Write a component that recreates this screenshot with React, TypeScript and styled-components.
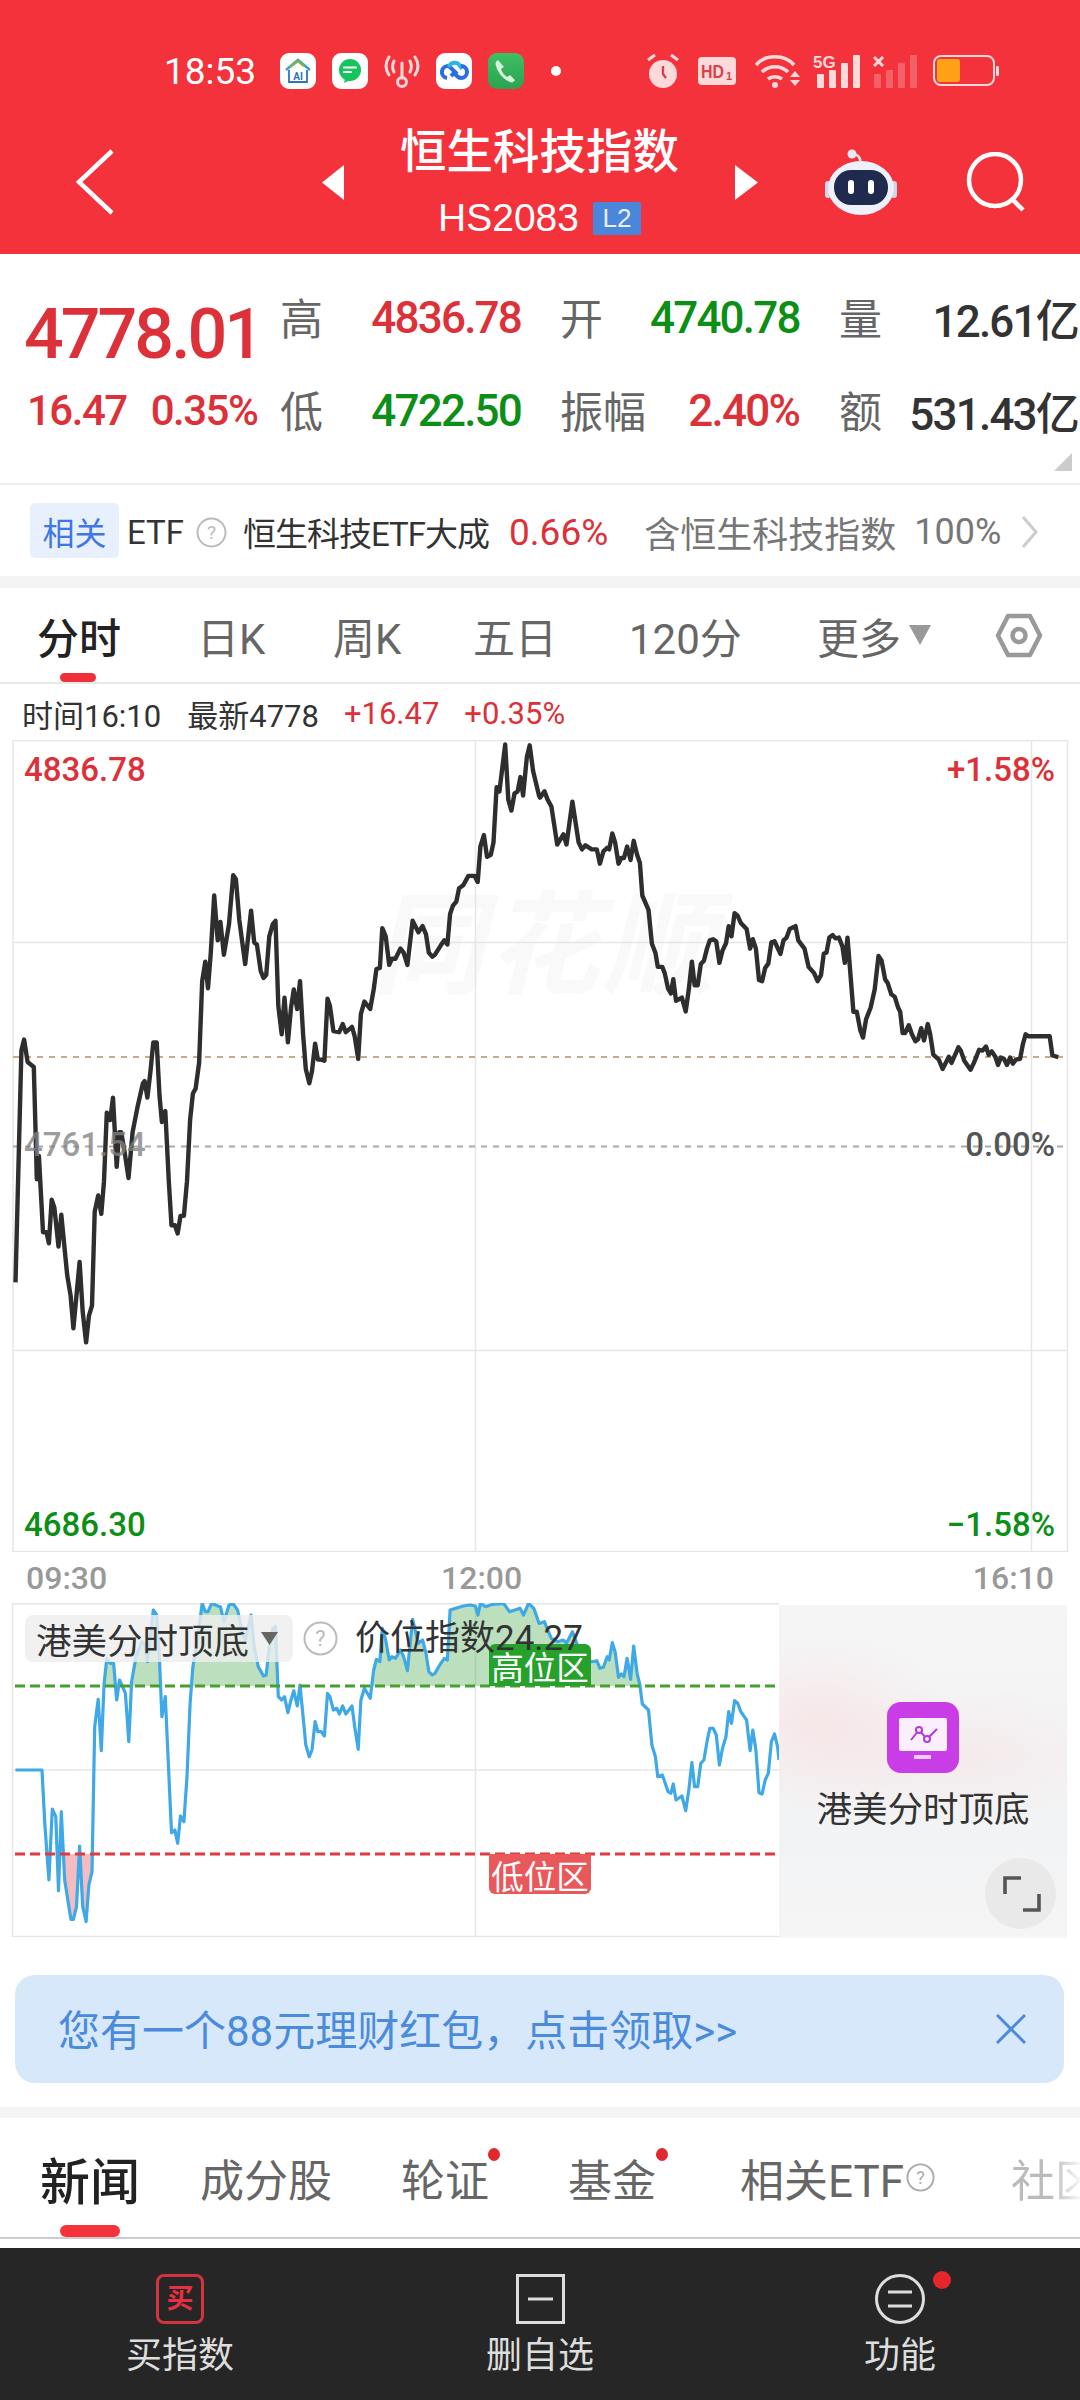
import React from "react";
import styled, { createGlobalStyle } from "styled-components";

const RED = "#dc3138";
const GREEN = "#0c8f17";
const FONT = `Roboto, "Noto Sans CJK SC", sans-serif`;

const Global = createGlobalStyle`
  html, body { margin: 0; padding: 0; background: #fff; }
  * { box-sizing: border-box; }
`;

const Page = styled.div`
  width: 1080px; height: 2400px; display: flex; flex-direction: column; overflow: hidden;
  background: #fff; font-family: ${FONT}; color: #333;
`;

/* header */
const Header = styled.header`
  height: 254px; flex: none; background: #f4323c; color: #fff; display: flex; flex-direction: column;
`;
const StatusBar = styled.div`
  display: flex; align-items: center; height: 36px; margin-top: 53px; padding: 0 81px 0 164px;
`;
const Clock = styled.span`
  font-size: 37px; width: 116px; color: #fff;
`;
const AppIcons = styled.div`
  display: flex; gap: 16px; align-items: center;
`;
const AppTile = styled.span<{ $bg?: string }>`
  width: 36px; height: 36px; border-radius: 9px; background: ${(p) => p.$bg || "#fff"}; display: block; overflow: hidden;
  svg { display: block; }
`;
const Dot = styled.span`
  width: 10px; height: 10px; border-radius: 50%; background: #fff; margin-left: 27px;
`;
const Indicators = styled.div`
  display: flex; gap: 13px; align-items: center; margin-left: auto;
  svg { display: block; }
`;
const NavBar = styled.div`
  display: grid; grid-template-columns: 246px 22px 391px 90px 141px 1fr; align-items: center;
  height: 116px; margin-top: 35px; padding-left: 76px;
  svg { display: block; }
`;
const TitleBlock = styled.div`
  display: flex; flex-direction: column; align-items: center; gap: 16px;
`;
const Title = styled.div`
  font-size: 46.5px; line-height: 56px; font-weight: 500; white-space: nowrap;
`;
const SubTitle = styled.div`
  display: flex; align-items: center; gap: 14px; height: 44px; font-size: 39px; font-family: "Liberation Sans", sans-serif;
`;
const Level = styled.span`
  width: 48px; height: 33px; background: #4a86da; color: #e8f0ff; border-radius: 2px; font-size: 26px;
  display: flex; align-items: center; justify-content: center;
`;

/* quote */
const Quote = styled.section`
  position: relative; height: 231px; flex: none; padding: 17px 0 0 24px; border-bottom: 2px solid #eee;
  display: grid; grid-template-columns: 256px 90px 151px 129px 149px 106px 173px; grid-auto-rows: 93px; align-items: center;
`;
const BigPrice = styled.div`
  font-size: 70px; font-weight: 500; letter-spacing: -3px; color: ${RED}; margin-top: 32px; line-height: 1;
`;
const ChangeGroup = styled.div`
  display: flex; gap: 24px; padding-left: 3px; white-space: nowrap;
`;
const Change = styled.span`
  font-size: 42px; letter-spacing: -1.5px; color: ${RED}; font-weight: 500;
`;
const QLabel = styled.span<{ $inset?: number }>`
  font-size: 43px; color: #666; padding-left: ${(p) => p.$inset || 0}px; margin-bottom: 3px; white-space: nowrap;
`;
const QValue = styled.span<{ $c?: string }>`
  font-size: 44px; letter-spacing: -1.8px; font-weight: 500; text-align: right; white-space: nowrap; color: ${(p) => p.$c || "#333"};
`;
const Corner = styled.span`
  position: absolute; right: 8px; top: 199px; width: 18px; height: 18px; background: #ccc;
  clip-path: polygon(100% 0, 100% 100%, 0 100%);
`;

/* ETF row */
const EtfRow = styled.div`
  height: 91px; flex: none; display: flex; align-items: center; padding: 3px 0 0 30px; white-space: nowrap; font-size: 33px;
  svg { display: block; }
`;
const EtfTag = styled.span`
  width: 89px; height: 55px; margin-top: -3px; background: #e8f0fd; color: #3f77e4; border-radius: 5px; font-size: 32px;
  display: flex; align-items: center; justify-content: center; flex: none;
`;
const EtfText = styled.span<{ $ml: number; $c?: string; $size?: number; $ls?: number }>`
  margin-left: ${(p) => p.$ml}px; color: ${(p) => p.$c || "#333"}; letter-spacing: ${(p) => p.$ls || 0}px; flex: none;
  font-size: ${(p) => p.$size || 33}px;
`;
const HelpIcon = styled.svg<{ $ml: number }>`
  margin-left: ${(p) => p.$ml}px; flex: none;
`;
const Band = styled.div<{ $h: number }>`
  height: ${(p) => p.$h}px; flex: none; background: #f4f4f4;
`;

/* period tabs */
const PeriodTabs = styled.nav`
  height: 96px; flex: none; padding-left: 37px; border-bottom: 2px solid #e8e8e8;
  display: grid; grid-template-columns: 160px 136px 140px 156px 188px 178px 1fr; align-items: center;
  svg { display: block; }
`;
const PeriodTab = styled.div<{ $active?: boolean }>`
  position: relative; height: 94px; display: flex; align-items: center; font-size: 42px; white-space: nowrap;
  color: ${(p) => (p.$active ? "#222" : "#666")}; font-weight: ${(p) => (p.$active ? 500 : 400)};
  ${(p) =>
    p.$active &&
    `&::after { content: ""; position: absolute; left: 23px; bottom: 0; width: 36px; height: 9px; border-radius: 5px; background: #ef3039; }`}
`;
const Caret = styled.span`
  width: 22px; height: 20px; margin: 0 0 0 8px; background: #999; clip-path: polygon(0 0, 100% 0, 50% 100%);
`;

/* info line */
const InfoRow = styled.div`
  height: 56px; flex: none; padding: 2px 0 0 22px; display: flex; align-items: center; font-size: 31px; white-space: nowrap;
`;
const InfoText = styled.span<{ $ml?: number; $c?: string }>`
  margin-left: ${(p) => p.$ml || 0}px; color: ${(p) => p.$c || "#333"};
`;

/* main chart */
const ChartBox = styled.div`
  position: relative; height: 812px; flex: none;
  svg { display: block; }
`;
const AxisLabel = styled.span<{ $top: number; $left?: number; $right?: number; $c: string }>`
  position: absolute; top: ${(p) => p.$top}px; line-height: 40px; font-size: 33px; font-weight: 500; white-space: nowrap;
  color: ${(p) => p.$c};
  ${(p) => (p.$left !== undefined ? `left:${p.$left}px;` : `right:${p.$right}px;`)}
`;
const TimeAxis = styled.div`
  height: 51px; flex: none; padding: 0 26px; display: grid; grid-template-columns: 415px 1fr auto; align-items: center;
  font-size: 32px; font-weight: 500; color: #999;
`;

/* sub chart */
const SubChart = styled.div`
  position: relative; height: 335px; flex: none; display: grid; grid-template-columns: 779px 288px;
  svg { display: block; }
`;
const IndicatorPick = styled.div`
  position: absolute; left: 25px; top: 12px; width: 268px; height: 47px; border-radius: 8px; background: rgba(238, 238, 238, 0.82);
  display: flex; align-items: center; padding-left: 11px; font-size: 35.5px; color: #333; white-space: nowrap;
`;
const PickCaret = styled.span`
  width: 17px; height: 13px; margin-left: 12px; background: #666; clip-path: polygon(0 0, 100% 0, 50% 100%);
`;
const SubHelp = styled.svg`
  position: absolute; left: 303px; top: 18px;
`;
const PosValue = styled.span`
  position: absolute; left: 355px; top: 12px; line-height: 47px; font-size: 35px; color: #333; white-space: nowrap; z-index: 2;
`;
const ZoneTag = styled.span<{ $top: number; $h: number; $bg: string; $r: string }>`
  position: absolute; left: 489px; top: ${(p) => p.$top}px; width: 102px; height: ${(p) => p.$h}px; background: ${(p) => p.$bg};
  border-radius: ${(p) => p.$r}; color: #fff; font-size: 32.5px; display: flex; align-items: center; justify-content: center;
  white-space: nowrap;
`;
const PromoPanel = styled.div`
  position: relative; margin-top: 2px; display: flex; flex-direction: column; align-items: center; padding-top: 97px;
  background:
    radial-gradient(ellipse 130px 90px at 40px 120px, rgba(248, 226, 228, 0.75), transparent),
    radial-gradient(ellipse 170px 70px at 180px 150px, rgba(246, 230, 232, 0.7), transparent),
    linear-gradient(#f5f5f6, #f2f3f4 70%, #f5f5f6);
`;
const PromoIcon = styled.svg`
  flex: none;
`;
const PromoText = styled.div`
  margin-top: 15px; font-size: 35.5px; line-height: 44px; color: #333; white-space: nowrap;
`;
const ExpandButton = styled.span`
  position: absolute; right: 11px; bottom: 9px; width: 71px; height: 71px; border-radius: 50%; background: #e9e9e9;
`;

/* banner */
const Banner = styled.div`
  height: 108px; flex: none; margin: 37px 16px 24px 15px; padding: 0 38px 0 43px; border-radius: 20px; background: #d8e8fb;
  display: flex; align-items: center; justify-content: space-between; color: #4a8bdc; font-size: 42px; white-space: nowrap;
  svg { display: block; }
`;
const BannerText = styled.span`
  margin-top: -3px;
`;

/* news tabs */
const NewsTabs = styled.nav`
  height: 121px; flex: none; padding-left: 40px; border-bottom: 2px solid #ccc; overflow: hidden;
  display: grid; grid-template-columns: 160px 201px 167px 172px 271px 69px; align-items: center;
  svg { display: block; }
`;
const NewsTab = styled.div<{ $active?: boolean; $dot?: number; $fade?: boolean }>`
  position: relative; height: 119px; display: flex; align-items: center; white-space: nowrap; overflow: visible;
  font-size: ${(p) => (p.$active ? 50 : 44)}px; font-weight: ${(p) => (p.$active ? 500 : 400)};
  color: ${(p) => (p.$active ? "#222" : p.$fade ? "#bbb" : "#666")};
  ${(p) => p.$fade && `-webkit-mask-image: linear-gradient(to right, #000 60%, rgba(0,0,0,.1) 100%); mask-image: linear-gradient(to right, #000 60%, rgba(0,0,0,.1) 100%);`}
  ${(p) =>
    p.$dot !== undefined &&
    `&::after { content: ""; position: absolute; left: ${p.$dot}px; top: 30px; width: 12px; height: 13px; border-radius: 50%; background: #e0282f; }`}
  ${(p) =>
    p.$active &&
    `&::before { content: ""; position: absolute; left: 20px; bottom: 0; width: 60px; height: 12px; border-radius: 6px; background: #f5333d; }`}
`;
const Spacer = styled.div`
  height: 9px; flex: none;
`;

/* footer */
const Footer = styled.footer`
  flex: 1; background: #262626; display: grid; grid-template-columns: repeat(3, 1fr); padding-top: 26px;
`;
const FootItem = styled.div`
  display: flex; flex-direction: column; align-items: center; color: #ddd; font-size: 36px; line-height: 44px; white-space: nowrap;
  svg { display: block; }
`;
const FootIcon = styled.div`
  position: relative; height: 50px; margin-bottom: 10px; display: flex; align-items: center;
`;
const BuyMark = styled.span`
  width: 48px; height: 50px; border: 3px solid #d2333f; border-radius: 8px; color: #ea2f45; font-size: 27px; font-weight: 700;
  display: flex; align-items: center; justify-content: center;
`;
const FootDot = styled.span`
  position: absolute; left: 58px; top: -3px; width: 18px; height: 18px; border-radius: 50%; background: #e5262c;
`;

/* data traced from the picture */
type P = [number, number];
const A: P[] = [[45,1378],[62,810],[70,783],[80,838],[98,850],[105,1065],[107,1125],[113,1068],[125,1255],[135,1255],[142,1282],[150,1175],[158,1195],[170,1290],[178,1212],[195,1360],[205,1410],[213,1490],[231,1328],[240,1450],[250,1525],[258,1460],[267,1435],[275,1205],[285,1165],[294,1210],[302,1130],[310,962],[320,980],[328,925],[339,1095],[346,1010],[352,1010],[362,1060],[373,1122],[385,1010],[400,945],[415,890],[420,885],[428,925],[437,860],[445,790],[455,790],[463,920],[470,985],[480,958],[490,1130],[498,1238],[508,1238],[516,1258],[524,1215],[534,1215],[543,1130],[552,980],[560,915],[568,903],[578,840],[587,640],[596,592],[604,657],[612,570],[622,430],[632,540],[640,495],[650,575],[665,500],[677,380],[685,390],[695,490],[712,598],[729,467],[738,545],[746,550],[757,615],[765,632],[773,625],[782,530],[792,500],[800,492],[808,700],[818,770],[826,680],[836,790],[845,705],[853,660],[863,708],[871,640],[880,770],[888,855],[898,890],[906,860],[915,793],[923,832],[933,832],[942,835],[951,683],[958,700],[968,762],[985,765],[995,745],[1004,765],[1022,752],[1030,775],[1040,830],[1048,720],[1058,690],[1075,708],[1085,660],[1093,610],[1103,607],[1110,510],[1120,530],[1130,600],[1138,585],[1148,585],[1163,560],[1172,570],[1183,600],[1198,492],[1215,520],[1227,505],[1237,525],[1245,570],[1255,580],[1263,575],[1280,552],[1290,540],[1299,550],[1307,475],[1315,455],[1325,445],[1333,412],[1345,405],[1360,382],[1378,382],[1387,397],[1395,310],[1405,282],[1414,335],[1425,330],[1433,300],[1442,165],[1450,175],[1467,60],[1476,195],[1485,222],[1494,180],[1503,175],[1511,140],[1519,185],[1530,90],[1538,62],[1548,125],[1565,185]];
const B: P[] = [[0,190],[13,175],[22,195],[33,212],[50,305],[68,280],[77,305],[94,200],[112,300],[122,317],[132,307],[150,317],[165,317],[174,352],[184,322],[195,313],[201,317],[210,278],[218,300],[228,352],[236,338],[244,338],[253,310],[263,343],[272,296],[282,330],[290,350],[297,430],[315,465],[325,548],[335,570],[342,605],[355,605],[362,620],[372,658],[380,670],[387,635],[395,688],[412,680],[423,714],[432,660],[441,592],[449,650],[458,650],[467,598],[476,590],[485,560],[493,540],[503,537],[512,543],[521,595],[530,565],[540,547],[548,505],[556,530],[565,473],[574,480],[583,497],[600,512],[610,560],[618,537],[627,560],[636,637],[645,640],[654,607],[663,597],[672,545],[681,542],[698,573],[707,540],[716,533],[725,512],[742,505],[750,540],[768,560],[780,605],[796,620],[806,640],[816,625],[824,572],[832,570],[840,533],[850,527],[858,535],[868,533],[878,555],[885,595],[893,533],[903,640],[910,715],[920,715],[930,760],[938,778],[947,733],[960,705],[972,660],[983,578],[992,590],[1002,635],[1010,645],[1020,672],[1030,678],[1040,705],[1046,715],[1053,767],[1060,767],[1071,748],[1080,770],[1090,787],[1098,782],[1107,755],[1115,785],[1126,745],[1133,770],[1142,820],[1158,832],[1169,855],[1178,840],[1187,825],[1195,840],[1215,802],[1222,810],[1232,835],[1250,857],[1260,840],[1275,808],[1285,810],[1295,800],[1303,820],[1312,812],[1322,825],[1330,845],[1338,827],[1347,830],[1356,845],[1365,827],[1373,842],[1382,832],[1394,830],[1402,795],[1410,770],[1418,775],[1480,775],[1488,822],[1505,826]];
const C: P[] = [[45,630],[122,630],[130,790],[142,960],[152,747],[162,770],[170,992],[178,755],[188,960],[200,1040],[206,1078],[213,1078],[222,1040],[231,858],[240,1040],[250,1085],[258,975],[267,935],[275,500],[285,418],[294,572],[302,375],[310,295],[320,310],[330,310],[339,420],[347,360],[358,385],[364,400],[374,545],[382,365],[395,290],[412,245],[420,250],[428,305],[437,230],[445,150],[455,165],[463,300],[470,470],[480,410],[490,640],[498,818],[508,810],[516,850],[524,768],[534,785],[543,650],[552,430],[560,320],[568,270],[578,200],[587,130],[596,155],[604,155],[615,130],[632,138],[640,140],[650,185],[665,135],[677,132],[690,150],[700,200],[712,240],[729,165],[738,260],[750,320],[765,348],[773,345],[782,260],[792,205],[800,200],[808,410],[818,420],[826,410],[836,458],[845,420],[853,392],[863,438],[871,375],[880,470],[888,555],[898,590],[906,570],[915,485],[923,515],[933,515],[942,528],[951,400],[958,410],[968,450],[978,445],[985,462],[995,438],[1004,462],[1022,438],[1030,500],[1040,568],[1048,420],[1058,385],[1075,415],[1085,330],[1093,298],[1103,305],[1110,205],[1120,240],[1130,300],[1138,290],[1148,295],[1163,270],[1172,290],[1183,332],[1198,178],[1215,250],[1227,240],[1237,280],[1245,335],[1255,345],[1263,340],[1280,310],[1290,295],[1299,300],[1307,150],[1345,138],[1365,135],[1380,138],[1388,165],[1395,130],[1410,140],[1430,133],[1462,130],[1480,155],[1510,145],[1520,165],[1535,130],[1550,145],[1565,190]];
const D: P[] = [[0,190],[13,185],[22,210],[33,235],[50,245],[68,240],[77,250],[94,215],[112,265],[122,300],[150,305],[165,302],[174,325],[184,322],[195,290],[201,300],[210,248],[218,275],[228,352],[236,342],[244,350],[253,295],[263,358],[272,258],[282,340],[290,375],[297,432],[315,450],[325,555],[335,590],[342,650],[355,645],[362,665],[372,695],[380,700],[387,672],[395,720],[412,708],[423,752],[432,690],[441,608],[449,680],[458,680],[467,610],[476,600],[485,545],[493,505],[503,505],[512,525],[521,615],[530,565],[540,530],[548,455],[556,490],[565,422],[574,430],[583,455],[600,480],[610,572],[618,510],[627,570],[636,698],[645,702],[654,660],[663,640],[672,545],[681,522],[690,560],[694,600]];

const SX = 1568 / 540;
const toPath = (pts: P[]) => pts.map(([x, y], i) => `${i ? "L" : "M"}${x.toFixed(1)} ${y.toFixed(1)}`).join("");
const pricePts: P[] = [
  ...A.map(([x, y]): P => [x / SX, 720 + y / 2.45]),
  ...B.map(([x, y]): P => [540 + x / SX, 720 + y / 2.45]),
];
const subPts: P[] = [
  ...C.map(([x, y]): P => [x / SX, 1560 + y / 3]),
  ...D.map(([x, y]): P => [540 + x / SX, 1560 + y / 3]),
];
const pricePath = toPath(pricePts);
const subPath = toPath(subPts);
const subFirst = subPts[0][0];
const subLast = subPts[subPts.length - 1][0];
const greenFill = `${subPath}L${subLast} 1937L${subFirst} 1937Z`;
const redFill = `${subPath}L${subLast} 1603L${subFirst} 1603Z`;

const GRID = "#e6e6e6";

function MainChart() {
  return (
    <svg width={1080} height={812} viewBox="0 740 1080 812">
      <text x={372} y={985} fontFamily={`"Noto Sans CJK SC", sans-serif`} fontWeight={700} fontStyle="italic" fontSize={112} fill="#f9f9f9" textLength={343}>同花顺</text>
      <g stroke={GRID} strokeWidth={1.5} fill="none">
        <path d="M13 740.5H1067.5V1551.5H13Z" />
        <path d="M13 942.5H1067.5M13 1350.5H1067.5M475.5 740V1552M1031.5 740V1552" />
      </g>
      <path d="M13 1057H1064" stroke="#c9aa86" strokeWidth={2} strokeDasharray="6 6" fill="none" />
      <path d="M13 1146.500H1064" stroke="#aaa" strokeWidth={2} strokeDasharray="6 6" fill="none" />
      <path d={pricePath} stroke="#2e2e2e" strokeWidth={4.4} strokeLinejoin="round" fill="none" />
    </svg>
  );
}

function SubChartPlot() {
  return (
    <svg width={779} height={335} viewBox="0 1603 779 335">
      <defs>
        <clipPath id="hi"><rect x={0} y={1603} width={779} height={83} /></clipPath>
        <clipPath id="lo"><rect x={0} y={1854} width={779} height={83} /></clipPath>
      </defs>
      <g stroke={GRID} strokeWidth={1.5} fill="none">
        <path d="M12.500 1937V1603.700H779M12.500 1936.500H779M12.500 1770H779M475.500 1603V1937" />
      </g>
      <path d={greenFill} fill="rgba(70,170,75,.36)" clipPath="url(#hi)" />
      <path d={redFill} fill="rgba(228,95,105,.42)" clipPath="url(#lo)" />
      <path d={subPath} stroke="#3fa8e6" strokeWidth={3.2} strokeLinejoin="round" fill="none" />
      <path d="M15 1686H775" stroke="#46a02f" strokeWidth={3} strokeDasharray="10 5" fill="none" />
      <path d="M15 1854H775" stroke="#e0393f" strokeWidth={3} strokeDasharray="10 5" fill="none" />
    </svg>
  );
}

const Help = ({ size = 31, c = "#bbb", t = "#bbb" }: { size?: number; c?: string; t?: string }) => (
  <>
    <circle cx={size / 2} cy={size / 2} r={size / 2 - 1.5} stroke={c} strokeWidth={2} fill="none" />
    <text x={size / 2} y={size * 0.72} textAnchor="middle" fontSize={size * 0.62} fontFamily="Roboto, sans-serif" fill={t}>?</text>
  </>
);

const PINK = "#fdd9da";

export default function App() {
  return (
    <Page>
      <Global />
      <Header>
        <StatusBar>
          <Clock>18:53</Clock>
          <AppIcons>
            <AppTile>
              <svg width={36} height={36} viewBox="0 0 36 36">
                <path d="M6 17 18 7l12 10" stroke="#3d9be0" strokeWidth={2.5} fill="none" />
                <path d="M10 14 18 8l6 5" stroke="#7ab648" strokeWidth={2.5} fill="none" />
                <path d="M9 17v12h18V17" stroke="#2b77b8" strokeWidth={1.8} fill="none" />
                <text x={18} y={27} textAnchor="middle" fontSize={10} fontWeight={700} fontFamily="Roboto, sans-serif" fill="#2b77b8">AI</text>
              </svg>
            </AppTile>
            <AppTile>
              <svg width={36} height={36} viewBox="0 0 36 36">
                <circle cx={18} cy={17} r={11} fill="#16c45e" />
                <path d="M13 26l-1 4 6-3z" fill="#16c45e" />
                <path d="M12 14.500h12M12 19h7" stroke="#fff" strokeWidth={2.2} strokeLinecap="round" />
              </svg>
            </AppTile>
            <svg width={36} height={36} viewBox="0 0 36 36" fill="none" stroke={PINK} strokeWidth={3} strokeLinecap="round" style={{ display: "block" }}>
              <path d="M5 4C1 10 1 16 5 22M31 4c4 6 4 12 0 18M10 8c-2 4-2 7 0 11M26 8c2 4 2 7 0 11" />
              <path d="M18 10v15" />
              <circle cx={18} cy={29} r={4.5} />
            </svg>
            <AppTile>
              <svg width={36} height={36} viewBox="0 0 36 36" fill="none" strokeWidth={4}>
                <path d="M11 25a6 6 0 1 1 2-12l8 8" stroke="#2a6fe0" />
                <path d="M13 14a6 6 0 0 1 11-1l2 3" stroke="#2db5e8" />
                <path d="M25 13a6 6 0 1 1 0 12c-2 0-3-1-4-2l-3-3-3 3" stroke="#2a6fe0" />
              </svg>
            </AppTile>
            <AppTile $bg="linear-gradient(#3fbf63,#2ba350)">
              <svg width={36} height={36} viewBox="0 0 36 36">
                <path d="M10 7c-2 1-3 3-2 6 2 7 7 13 14 16 2 1 4 0 5-2l-5-5-3 2c-3-2-5-5-6-8l3-2z" fill="#d6f3dd" />
              </svg>
            </AppTile>
          </AppIcons>
          <Dot />
          <Indicators>
            <svg width={38} height={36} viewBox="0 0 38 36">
              <circle cx={16} cy={21} r={14} fill={PINK} />
              <path d="M16 13v8l3 4" stroke="#d8404a" strokeWidth={2.4} fill="none" />
              <path d="M1 7l7-5M31 7l-7-5" stroke={PINK} strokeWidth={3} />
            </svg>
            <svg width={44} height={36} viewBox="0 0 44 36">
              <rect x={0} y={4} width={38} height={28} rx={4} fill={PINK} />
              <text x={3} y={25} fontSize={19} fontWeight={700} textLength={23} lengthAdjust="spacingAndGlyphs" fontFamily={`"Liberation Sans", sans-serif`} fill="#d8404a">HD</text>
              <text x={28} y={27} fontSize={11} fontWeight={700} fontFamily={`"Liberation Sans", sans-serif`} fill="#d8404a">1</text>
            </svg>
            <svg width={45} height={36} viewBox="0 0 45 36" fill="none" stroke={PINK} strokeWidth={3.6}>
              <path d="M1 12C10 1 30 1 39 12M7 19c7-7 19-7 26 0M13 26c4-3 10-3 14 0" />
              <circle cx={20} cy={32} r={3} fill={PINK} stroke="none" />
              <path d="M35 24l5-6 5 6zM35 27l5 6 5-6z" fill={PINK} stroke="none" />
            </svg>
            <svg width={47} height={36} viewBox="0 0 47 36" fill={PINK}>
              <text x={0} y={15} fontSize={17} fontWeight={700} fontFamily={`"Liberation Sans", sans-serif`}>5G</text>
              <rect x={4} y={21} width={7} height={14} rx={1} />
              <rect x={16} y={17} width={7} height={18} rx={1} />
              <rect x={28} y={10} width={7} height={25} rx={1} />
              <rect x={40} y={2} width={7} height={33} rx={1} />
            </svg>
            <svg width={47} height={36} viewBox="0 0 47 36" fill={PINK}>
              <path d="M1 4l9 9M10 4l-9 9" stroke={PINK} strokeWidth={3} />
              <g opacity={0.28}>
                <rect x={1} y={21} width={7} height={14} rx={1} />
                <rect x={13} y={17} width={7} height={18} rx={1} />
                <rect x={25} y={10} width={7} height={25} rx={1} />
                <rect x={37} y={2} width={7} height={33} rx={1} />
              </g>
            </svg>
            <svg width={66} height={36} viewBox="0 0 66 36">
              <rect x={1} y={3} width={60} height={29} rx={7} stroke={PINK} strokeWidth={2} fill="none" />
              <rect x={4} y={6} width={23} height={23} rx={3} fill="#ffa216" />
              <rect x={63} y={13} width={3} height={10} rx={1} fill={PINK} />
            </svg>
          </Indicators>
        </StatusBar>
        <NavBar>
          <svg width={38} height={66} viewBox="0 0 38 66" fill="none" stroke="#fff" strokeWidth={4.5}>
            <path d="M36 2 3 33l33 31" />
          </svg>
          <svg width={22} height={35} viewBox="0 0 22 35"><path d="M22 0v35L0 17.500z" fill="#fff" /></svg>
          <TitleBlock>
            <Title>恒生科技指数</Title>
            <SubTitle>
              HS2083
              <Level>L2</Level>
            </SubTitle>
          </TitleBlock>
          <svg width={23} height={35} viewBox="0 0 23 35"><path d="M0 0v35l23-17.500z" fill="#fff" /></svg>
          <svg width={72} height={66} viewBox="0 0 72 66">
            <path d="M35 14c1-5-2-9-7-8" stroke="#e6e6f5" strokeWidth={2.5} fill="none" />
            <circle cx={27} cy={5} r={4.5} fill="#ece9f5" />
            <rect x={0} y={32} width={6} height={17} rx={3} fill="#d5d5ea" />
            <rect x={66} y={32} width={6} height={17} rx={3} fill="#d5d5ea" />
            <ellipse cx={36} cy={39} rx={33} ry={27} fill="#eef0fb" />
            <rect x={9} y={21} width={54} height={35} rx={17} fill="#1f2a4e" />
            <rect x={23} y={31} width={6} height={14} rx={3} fill="#fff" />
            <rect x={43} y={31} width={6} height={14} rx={3} fill="#fff" />
          </svg>
          <svg width={60} height={60} viewBox="0 0 60 60" fill="none" stroke="#fff" strokeWidth={4.5}>
            <circle cx={29} cy={28} r={26} />
            <path d="M46 47l11 11" />
          </svg>
        </NavBar>
      </Header>

      <Quote>
        <BigPrice>4778.01</BigPrice>
        <QLabel>高</QLabel>
        <QValue $c={RED}>4836.78</QValue>
        <QLabel $inset={39}>开</QLabel>
        <QValue $c={GREEN}>4740.78</QValue>
        <QLabel $inset={40}>量</QLabel>
        <QValue>12.61亿</QValue>
        <ChangeGroup>
          <Change>16.47</Change>
          <Change>0.35%</Change>
        </ChangeGroup>
        <QLabel>低</QLabel>
        <QValue $c={GREEN}>4722.50</QValue>
        <QLabel $inset={39}>振幅</QLabel>
        <QValue $c={RED}>2.40%</QValue>
        <QLabel $inset={40}>额</QLabel>
        <QValue>531.43亿</QValue>
        <Corner />
      </Quote>

      <EtfRow>
        <EtfTag>相关</EtfTag>
        <EtfText $ml={8}>ETF</EtfText>
        <HelpIcon $ml={12} width={31} height={35} viewBox="0 0 31 31"><Help /></HelpIcon>
        <EtfText $ml={16} $ls={-1}>恒生科技ETF大成</EtfText>
        <EtfText $ml={20} $c={RED} $size={37}>0.66%</EtfText>
        <EtfText $ml={36} $c="#777" $size={36}>含恒生科技指数</EtfText>
        <EtfText $ml={18} $c="#777" $size={36}>100%</EtfText>
        <HelpIcon $ml={20} width={17} height={34} viewBox="0 0 17 34" fill="none" stroke="#ccc" strokeWidth={3}>
          <path d="M2 2l13 15L2 32" />
        </HelpIcon>
      </EtfRow>
      <Band $h={12} />

      <PeriodTabs>
        <PeriodTab $active>分时</PeriodTab>
        <PeriodTab>日K</PeriodTab>
        <PeriodTab>周K</PeriodTab>
        <PeriodTab>五日</PeriodTab>
        <PeriodTab>120分</PeriodTab>
        <PeriodTab>
          更多
          <Caret />
        </PeriodTab>
        <svg width={48} height={45} viewBox="0 0 48 45" fill="none" stroke="#999" strokeWidth={4.5} strokeLinejoin="round">
          <path d="M13 3h22l10 19.500L35 42H13L3 22.500z" />
          <circle cx={24} cy={22.5} r={6.5} />
        </svg>
      </PeriodTabs>

      <InfoRow>
        <InfoText>时间16:10</InfoText>
        <InfoText $ml={26}>最新4778</InfoText>
        <InfoText $ml={25} $c={RED}>+16.47</InfoText>
        <InfoText $ml={25} $c={RED}>+0.35%</InfoText>
      </InfoRow>

      <ChartBox>
        <MainChart />
        <AxisLabel $top={10} $left={24} $c={RED}>4836.78</AxisLabel>
        <AxisLabel $top={10} $right={25} $c={RED}>+1.58%</AxisLabel>
        <AxisLabel $top={385} $left={24} $c="rgba(130,130,130,.8)">4761.54</AxisLabel>
        <AxisLabel $top={385} $right={25} $c="#555">0.00%</AxisLabel>
        <AxisLabel $top={765} $left={24} $c={GREEN}>4686.30</AxisLabel>
        <AxisLabel $top={765} $right={25} $c={GREEN}>−1.58%</AxisLabel>
      </ChartBox>

      <TimeAxis>
        <span>09:30</span>
        <span>12:00</span>
        <span>16:10</span>
      </TimeAxis>

      <SubChart>
        <SubChartPlot />
        <PromoPanel>
          <PromoIcon width={72} height={71} viewBox="0 0 72 71">
            <rect width={72} height={71} rx={14} fill="#c83de6" />
            <rect x={12} y={16} width={48} height={33} rx={2} fill="#fbeffd" />
            <rect x={27} y={53} width={17} height={4} fill="#f3cdfa" />
            <path d="M24 38l8-10 8 9 10-10" stroke="#b23ad8" strokeWidth={2} fill="none" />
            <circle cx={32} cy={28} r={3} fill="#fbeffd" stroke="#b23ad8" strokeWidth={2} />
            <circle cx={40} cy={37} r={3} fill="#fbeffd" stroke="#b23ad8" strokeWidth={2} />
          </PromoIcon>
          <PromoText>港美分时顶底</PromoText>
          <ExpandButton>
            <svg width={71} height={71} viewBox="0 0 71 71" fill="none" stroke="#555" strokeWidth={3.6}>
              <path d="M20 36V20h16M54 36v16H38" />
            </svg>
          </ExpandButton>
        </PromoPanel>
        <IndicatorPick>
          港美分时顶底
          <PickCaret />
        </IndicatorPick>
        <SubHelp width={35} height={35} viewBox="0 0 35 35"><Help size={35} /></SubHelp>
        <PosValue>价位指数24.27</PosValue>
        <ZoneTag $top={41} $h={42} $bg="#26a22c" $r="6px 6px 0 0">高位区</ZoneTag>
        <ZoneTag $top={251} $h={40} $bg="#e9585b" $r="0 0 6px 6px">低位区</ZoneTag>
      </SubChart>

      <Banner>
        <BannerText>您有一个88元理财红包，点击领取&gt;&gt;</BannerText>
        <svg width={30} height={30} viewBox="0 0 30 30" stroke="#4a8bdc" strokeWidth={3} fill="none">
          <path d="M1 1l28 28M29 1 1 29" />
        </svg>
      </Banner>
      <Band $h={11} />

      <NewsTabs>
        <NewsTab $active>新闻</NewsTab>
        <NewsTab>成分股</NewsTab>
        <NewsTab $dot={87}>轮证</NewsTab>
        <NewsTab $dot={88}>基金</NewsTab>
        <NewsTab>
          相关ETF
          <svg width={29} height={29} viewBox="0 0 31 31" style={{ marginLeft: 2 }}><Help c="#aaa" t="#aaa" /></svg>
        </NewsTab>
        <NewsTab $fade>社区</NewsTab>
      </NewsTabs>
      <Spacer />

      <Footer>
        <FootItem>
          <FootIcon><BuyMark>买</BuyMark></FootIcon>
          买指数
        </FootItem>
        <FootItem>
          <FootIcon>
            <svg width={49} height={50} viewBox="0 0 49 50" fill="none" stroke="#ddd" strokeWidth={3}>
              <rect x={1.5} y={1.5} width={46} height={47} />
              <path d="M12 25h25" />
            </svg>
          </FootIcon>
          删自选
        </FootItem>
        <FootItem>
          <FootIcon>
            <svg width={50} height={50} viewBox="0 0 50 50" fill="none" stroke="#ddd" strokeWidth={3}>
              <circle cx={25} cy={25} r={23.5} />
              <path d="M13 18h24M13 32h24" />
            </svg>
            <FootDot />
          </FootIcon>
          功能
        </FootItem>
      </Footer>
    </Page>
  );
}
